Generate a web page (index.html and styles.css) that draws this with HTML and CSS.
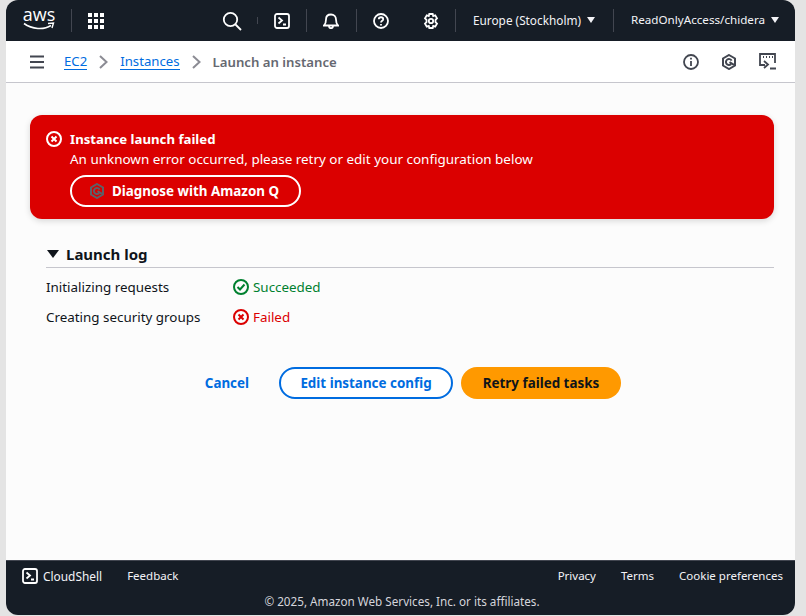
FILE: index.html
```html
<!DOCTYPE html>
<html lang="en">

<head>
    <meta charset="UTF-8">
    <title>Launch an instance</title>
    <link rel="stylesheet" href="styles.css">
</head>

<body>
    <div class="console">
        <header class="top-nav">
            <span class="aws-logo">
                <span class="aws-word">aws</span>
                <svg class="aws-smile" width="32" height="9" viewBox="0 0 32 9">
                    <path d="M1 1.5C9 7.5 21 8 28 3.5" fill="none" stroke="#fff" stroke-width="1.6" />
                    <path d="M25 1.5L30.5 1L29 6" fill="none" stroke="#fff" stroke-width="1.4" />
                </svg>
            </span>
            <span class="nav-sep sep-logo"></span>
            <svg class="apps-icon" width="16" height="16" viewBox="0 0 16 16" fill="#fff">
                <rect width="4" height="4" /><rect x="6" width="4" height="4" /><rect x="12" width="4" height="4" />
                <rect y="6" width="4" height="4" /><rect x="6" y="6" width="4" height="4" /><rect x="12" y="6" width="4" height="4" />
                <rect y="12" width="4" height="4" /><rect x="6" y="12" width="4" height="4" /><rect x="12" y="12" width="4" height="4" />
            </svg>

            <svg class="nav-icon search-icon" width="20" height="20" viewBox="0 0 20 20">
                <circle cx="8.5" cy="8.5" r="6.7" />
                <path d="M13.5 13.5L19 19" />
            </svg>
            <span class="nav-sep sep-short"></span>
            <svg class="nav-icon shell-icon" width="16" height="16" viewBox="0 0 16 16">
                <rect x="1" y="1" width="14" height="14" rx="2" />
                <path d="M4.5 4.5L8 7.5L4.5 10.5M9 11.5H12" />
            </svg>
            <span class="nav-sep sep-bell"></span>
            <svg class="nav-icon bell-icon" width="16" height="16" viewBox="0 0 16 16">
                <path d="M1 12.5H15C13 10.5 13 9 13 6.5C13 3.5 11 1.5 8 1.5C5 1.5 3 3.5 3 6.5C3 9 3 10.5 1 12.5Z" />
                <path d="M6 13C6 16 10 16 10 13" />
            </svg>
            <span class="nav-sep sep-help"></span>
            <svg class="nav-icon help-icon" width="16" height="16" viewBox="0 0 16 16">
                <circle cx="8" cy="8" r="7" />
                <path d="M5.8 6.2C5.8 3.6 10.2 3.6 10.2 6.2C10.2 7.8 8 7.8 8 9.6" />
                <path d="M8 11V12.4" />
            </svg>
            <svg class="nav-icon gear-icon" width="16" height="16" viewBox="0 0 16 16">
                <path d="M6.3 1H9.7L10.2 3L12.2 2.4L14 5.3L12.5 6.8V9.2L14 10.7L12.2 13.6L10.2 13L9.7 15H6.3L5.8 13L3.8 13.6L2 10.7L3.5 9.2V6.8L2 5.3L3.8 2.4L5.8 3Z" />
                <circle cx="8" cy="8" r="2.2" />
            </svg>
            <span class="nav-sep sep-region"></span>
            <span class="nav-menu region-menu">Europe (Stockholm)<span class="caret"></span></span>
            <span class="nav-sep sep-user"></span>
            <span class="nav-menu user-menu">ReadOnlyAccess/chidera<span class="caret"></span></span>
        </header>

        <div class="breadcrumb-bar">
            <svg class="menu-icon" width="16" height="14" viewBox="0 0 16 14">
                <path d="M1 1.5H15M1 7H15M1 12.5H15" />
            </svg>
            <a class="crumb-link">EC2</a>
            <svg class="crumb-arrow" width="9" height="14" viewBox="0 0 9 14"><path d="M1 1L7.5 7L1 13" /></svg>
            <a class="crumb-link">Instances</a>
            <svg class="crumb-arrow" width="9" height="14" viewBox="0 0 9 14"><path d="M1 1L7.5 7L1 13" /></svg>
            <span class="crumb-current">Launch an instance</span>
            <div class="bar-tools">
                <svg class="tool-icon" width="16" height="16" viewBox="0 0 16 16">
                    <circle cx="8" cy="8" r="7" />
                    <path d="M8 7V12M8 3.8V5.6" />
                </svg>
                <svg class="tool-icon hex-icon" width="16" height="16" viewBox="0 0 16 16">
                    <path d="M8 1L14 4.5V11.5L8 15L2 11.5V4.5Z" />
                    <path d="M10.6 6.6A3 3 0 1 0 10 10.2M8.5 8.2L13 10.8" />
                </svg>
                <svg class="tool-icon" width="17" height="17" viewBox="0 0 17 17">
                    <path d="M6 12H1V1H16V10" />
                    <path d="M4 4H5M7 4H8M10 4H11M13 4H14" />
                    <path d="M5 8L9 11.5L5 15" />
                    <path d="M11 15.5H17" />
                </svg>
            </div>
        </div>

        <main class="content">
            <section class="flash-error">
                <svg class="flash-icon" width="16" height="16" viewBox="0 0 16 16">
                    <circle cx="8" cy="8" r="7" />
                    <path d="M5.5 5.5L10.5 10.5M10.5 5.5L5.5 10.5" />
                </svg>
                <div class="flash-body">
                    <div class="flash-title">Instance launch failed</div>
                    <div class="flash-text">An unknown error occurred, please retry or edit your configuration below</div>
                    <button class="btn-diagnose">
                        <svg class="q-icon" width="16" height="16" viewBox="0 0 16 16">
                            <path d="M8 1L14 4.5V11.5L8 15L2 11.5V4.5Z" />
                            <path d="M10.6 6.6A3 3 0 1 0 10 10.2M8.5 8.2L13 10.8" />
                        </svg>
                        Diagnose with Amazon Q
                    </button>
                </div>
            </section>

            <section class="log">
                <h2 class="log-title"><span class="log-caret"></span>Launch log</h2>
                <div class="log-row">
                    <span class="log-name">Initializing requests</span>
                    <span class="status status-ok">
                        <svg width="16" height="16" viewBox="0 0 16 16">
                            <circle cx="8" cy="8" r="7" />
                            <path d="M4.5 8L7 10.5L11.5 5.5" />
                        </svg>
                        Succeeded
                    </span>
                </div>
                <div class="log-row">
                    <span class="log-name">Creating security groups</span>
                    <span class="status status-fail">
                        <svg width="16" height="16" viewBox="0 0 16 16">
                            <circle cx="8" cy="8" r="7" />
                            <path d="M5.5 5.5L10.5 10.5M10.5 5.5L5.5 10.5" />
                        </svg>
                        Failed
                    </span>
                </div>
            </section>

            <div class="actions">
                <a class="btn-cancel">Cancel</a>
                <button class="btn btn-outline">Edit instance config</button>
                <button class="btn btn-primary">Retry failed tasks</button>
            </div>
        </main>

        <footer class="footer">
            <div class="footer-links">
                <svg class="footer-shell" width="16" height="16" viewBox="0 0 16 16">
                    <rect x="1" y="1" width="14" height="14" rx="2" />
                    <path d="M4.5 4.5L8 7.5L4.5 10.5M9 11.5H12" />
                </svg>
                <span class="footer-cloudshell">CloudShell</span>
                <span class="footer-feedback">Feedback</span>
                <span class="footer-privacy">Privacy</span>
                <span class="footer-terms">Terms</span>
                <span class="footer-cookie">Cookie preferences</span>
            </div>
            <div class="copyright">© 2025, Amazon Web Services, Inc. or its affiliates.</div>
        </footer>
    </div>
</body>

</html>
```
FILE: styles.css
```css
html,
body {
    height: 100%;
}

body {
    margin: 0;
    background-color: #e4e4e4;
    font-family: "Noto Sans", "Open Sans", sans-serif;
    font-size: 13.45px;
    overflow: hidden;
}

.console {
    width: 789px;
    height: 615px;
    margin-left: 6px;
    display: flex;
    flex-direction: column;
    background-color: #fcfcfc;
    border-radius: 12px;
    overflow: hidden;
}

.top-nav {
    height: 41px;
    flex: none;
    display: flex;
    align-items: center;
    background-color: #161d26;
    color: #fff;
}

.aws-logo {
    width: 32px;
    margin-left: 17px;
    display: flex;
    flex-direction: column;
    align-items: center;
}

.aws-word {
    font-family: "Open Sans", sans-serif;
    font-size: 18px;
    line-height: 15px;
    margin-top: -3px;
}

.aws-smile {
    display: block;
}

.nav-sep {
    width: 1px;
    height: 23px;
    background-color: #424650;
    flex: none;
}

.sep-logo {
    margin-left: 16px;
}

.apps-icon {
    margin-left: 16px;
}

.nav-icon {
    fill: none;
    stroke: #fff;
    stroke-width: 1.8;
    flex: none;
}

.search-icon {
    margin-left: 118px;
}

.sep-short {
    height: 7px;
    margin-left: 15px;
}

.shell-icon {
    margin-left: 16px;
}

.sep-bell {
    margin-left: 16px;
}

.bell-icon {
    margin-left: 16px;
}

.sep-help {
    margin-left: 17px;
}

.help-icon {
    margin-left: 16px;
}

.gear-icon {
    margin-left: 34px;
}

.sep-region {
    margin-left: 16px;
}

.nav-menu {
    display: flex;
    align-items: center;
    font-size: 11.8px;
    white-space: nowrap;
    color: #f3f3f7;
    padding-bottom: 2px;
}

.region-menu {
    margin-left: 17px;
}

.sep-user {
    margin-left: 18px;
}

.user-menu {
    margin-left: 17px;
    font-size: 11.65px;
}

.caret {
    width: 0;
    height: 0;
    margin-left: 6px;
    border-left: 4px solid transparent;
    border-right: 4px solid transparent;
    border-top: 6px solid #f3f3f7;
}

.breadcrumb-bar {
    height: 41px;
    flex: none;
    display: flex;
    align-items: center;
    background-color: #fff;
    border-bottom: 1px solid #c6c6cd;
    font-size: 13.2px;
}

.menu-icon {
    margin-left: 23px;
    fill: none;
    stroke: #424650;
    stroke-width: 2;
}

.crumb-link {
    margin-left: 19px;
    color: #006ce0;
    border-bottom: 1px solid #006ce0;
    line-height: 16px;
}

.crumb-arrow {
    margin-left: 12px;
    fill: none;
    stroke: #8c8c94;
    stroke-width: 2;
}

.crumb-arrow + .crumb-link {
    margin-left: 12px;
}

.crumb-current {
    margin-left: 12px;
    color: #656871;
    font-weight: 600;
}

.bar-tools {
    margin-left: auto;
    margin-right: 19px;
    display: flex;
    align-items: center;
    gap: 22px;
}

.tool-icon {
    fill: none;
    stroke: #424650;
    stroke-width: 1.8;
}

.hex-icon {
    stroke-width: 2;
}

.content {
    flex: 1;
    padding: 32px 21px 0 24px;
}

.flash-error {
    height: 104px;
    box-sizing: border-box;
    display: flex;
    padding: 16px;
    gap: 8px;
    background-color: #db0000;
    border-radius: 12px;
    box-shadow: 0 2px 6px rgba(0, 0, 0, 0.15);
    color: #fff;
}

.flash-icon {
    flex: none;
    fill: none;
    stroke: #fff;
    stroke-width: 2;
}

.flash-title {
    font-weight: 700;
    font-size: 13.2px;
    line-height: 16px;
}

.flash-text {
    margin-top: 4px;
    line-height: 16px;
}

.btn-diagnose {
    height: 32px;
    width: 231px;
    margin-top: 8px;
    display: flex;
    align-items: center;
    gap: 7px;
    background: transparent;
    border: 2px solid #fff;
    border-radius: 16px;
    color: #fff;
    font-family: inherit;
    font-size: 13.4px;
    font-weight: 700;
    padding: 0 0 0 17px;
}

.q-icon {
    fill: none;
    stroke: #5d6068;
    stroke-width: 2;
}

.log {
    margin-top: 24px;
    margin-left: 16px;
}

.log-title {
    margin: 0;
    height: 25px;
    box-sizing: border-box;
    padding-bottom: 2px;
    display: flex;
    align-items: center;
    font-size: 15px;
    font-weight: 700;
    color: #0f141a;
    border-bottom: 1px solid #c6c6cd;
}

.log-caret {
    width: 0;
    height: 0;
    margin: 0 7px 0 1px;
    border-left: 6px solid transparent;
    border-right: 6px solid transparent;
    border-top: 8px solid #0f141a;
}

.log-row {
    height: 30px;
    display: flex;
    align-items: center;
    color: #0f141a;
    font-size: 13.4px;
}

.log-title + .log-row {
    margin-top: 4px;
}

.log-name {
    width: 187px;
}

.status {
    display: flex;
    align-items: center;
    gap: 4px;
}

.status svg {
    fill: none;
    stroke-width: 2;
}

.status-ok {
    color: #00802f;
}

.status-ok svg {
    stroke: #00802f;
}

.status-fail {
    color: #db0000;
}

.status-fail svg {
    stroke: #db0000;
}

.actions {
    margin-top: 35px;
    display: flex;
    align-items: center;
    justify-content: flex-end;
    gap: 8px;
    margin-right: 153px;
}

.btn-cancel {
    color: #006ce0;
    font-weight: 700;
    font-size: 13.4px;
    margin-right: 22px;
}

.btn {
    height: 32px;
    box-sizing: border-box;
    border-radius: 16px;
    font-family: inherit;
    font-size: 13.4px;
    font-weight: 700;
    padding: 0;
}

.btn-outline {
    width: 174px;
    background-color: #fff;
    border: 2px solid #006ce0;
    color: #006ce0;
}

.btn-primary {
    width: 160px;
    background-color: #ff9900;
    border: none;
    color: #0f141a;
}

.footer {
    height: 55px;
    flex: none;
    box-sizing: border-box;
    background-color: #161d26;
    color: #f3f3f7;
    font-size: 11.5px;
    border-top: 1px solid #424650;
}

.footer-links {
    height: 29px;
    display: flex;
    align-items: center;
    padding: 0 12px 0 16px;
}

.footer-shell {
    fill: none;
    stroke: #fff;
    stroke-width: 1.8;
}

.footer-cloudshell {
    margin-left: 5px;
    font-size: 11.9px;
}

.footer-feedback {
    margin-left: 25px;
}

.footer-privacy {
    margin-left: auto;
}

.footer-terms {
    margin-left: 25px;
}

.footer-cookie {
    margin-left: 25px;
}

.copyright {
    text-align: center;
    color: #d5d5dc;
    line-height: 16px;
    padding: 3px 0 0 3px;
    font-size: 11.7px;
}
```
